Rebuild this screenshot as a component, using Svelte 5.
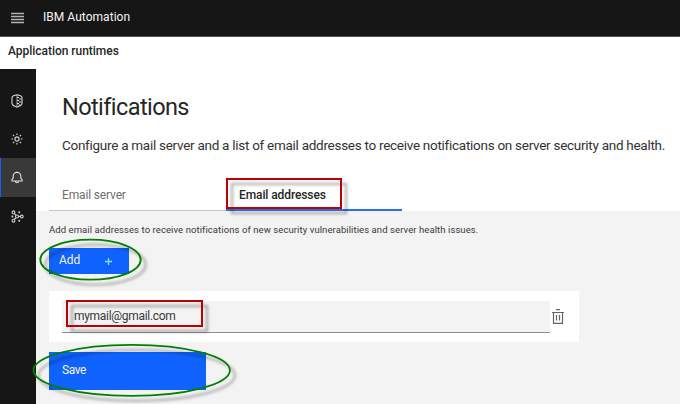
<script>
  const description = 'Configure a mail server and a list of email addresses to receive notifications on server security and health.';
  const hint = 'Add email addresses to receive notifications of new security vulnerabilities and server health issues.';
</script>

<div class="app">
  <header class="topbar">
    <svg class="menu" width="14" height="12" viewBox="0 0 14 12"><path d="M0 1.500h13M0 4.500h13M0 7.500h13M0 10.500h13" stroke="#b4b4b4" stroke-width="1.400" /></svg>
    <span class="brand">IBM Automation</span>
  </header>
  <div class="subbar"><span class="runtimes">Application runtimes</span></div>
  <div class="body">
    <nav>
      <div class="nav-item">
        <svg width="12" height="14" viewBox="0 0 12 14" fill="none" stroke="#d8d8d8"><path d="M6 .8 9.500 1.700 11 3.200v6.600L9.500 11.500 6 13.200 2.500 11.500 1 9.800V3.200L2.500 1.700z" stroke-width="1.100" /><path d="M6 1v12" stroke-width=".7" /><path d="M6 3.500h2M8 5h2.500M6 6.500h2M8 8h2.500M6 9.500h2M7.500 11h2" stroke-width="1" /></svg>
      </div>
      <div class="nav-item">
        <svg width="12" height="12" viewBox="0 0 12 12" fill="none" stroke="#cfcfcf" stroke-width="1.200"><circle cx="6" cy="6" r="2.100" /><path d="M6 .4v1.700M6 9.900v1.700M.4 6h1.700M9.900 6h1.700M2 2l1.200 1.200M8.800 8.800 10 10M10 2 8.800 3.200M3.200 8.800 2 10" /></svg>
      </div>
      <div class="nav-item active">
        <svg width="12" height="13" viewBox="0 0 12 13" fill="none" stroke="#e0e0e0" stroke-width="1.100"><path d="M6 .4v1.200M.9 10V8.700L2.200 7V5.200a3.800 3.800 0 0 1 7.600 0V7l1.300 1.700V10zM4.400 10.200a1.600 1.600 0 0 0 3.200 0" /></svg>
      </div>
      <div class="nav-item">
        <svg width="13" height="13" viewBox="0 0 13 13" fill="none" stroke="#cfcfcf" stroke-width="1.100"><circle cx="2.500" cy="2.300" r="1.400" /><circle cx="2.500" cy="10.700" r="1.400" /><circle cx="6" cy="6.500" r="1.500" /><circle cx="10.800" cy="6.500" r="1.400" /><path d="M3.300 3.500 5 5.300M3.300 9.500 5 7.700M7.500 6.500h1.900" /><g fill="#cfcfcf" stroke="none"><circle cx="1.400" cy="6.500" r="1" /><circle cx="8.200" cy="2.300" r="1" /><circle cx="8.200" cy="10.700" r="1" /></g></svg>
      </div>
    </nav>
    <main>
      <section class="intro">
        <h1>Notifications</h1>
        <p class="description">{description}</p>
        <div class="tabs">
          <div class="tab server"><span>Email server</span></div>
          <div class="tab selected"><span>Email addresses</span></div>
        </div>
      </section>
      <section class="panel">
        <p class="hint">{hint}</p>
        <button class="add"><span>Add</span><svg width="7" height="7" viewBox="0 0 7 7"><path d="M3.500 0v7M0 3.500h7" stroke="#8ed8ff" stroke-width="1.300" /></svg></button>
        <div class="card">
          <div class="field"><span>mymail@gmail.com</span></div>
          <svg class="trash" width="12" height="15" viewBox="0 0 12 15" fill="none" stroke="#666"><path d="M4 .7h4M0 3.500h12M1.500 3.500v10.800h9V3.500M4.500 6v5.500M7.500 6v5.500" stroke-width="1.200" /></svg>
        </div>
        <button class="save"><span>Save</span></button>
      </section>
    </main>
  </div>
  <svg class="marks" width="680" height="404" viewBox="0 0 680 404" fill="none">
    <defs>
      <filter id="shade" filterUnits="userSpaceOnUse" x="0" y="150" width="400" height="254" color-interpolation-filters="sRGB"><feDropShadow dx="5" dy="5" stdDeviation="1.600" flood-color="#000" flood-opacity=".35" /></filter>
    </defs>
    <g filter="url(#shade)" stroke-width="2">
      <rect x="227" y="179" width="114" height="29" stroke="#c00000" />
      <rect x="67" y="301" width="135" height="25" stroke="#c00000" />
      <ellipse cx="90.500" cy="259.700" rx="50.200" ry="20" stroke="#007f00" stroke-width="1.800" />
      <ellipse cx="131.700" cy="370.300" rx="98.200" ry="25.500" stroke="#007f00" stroke-width="1.800" />
    </g>
  </svg>
</div>

<style>
  :global(body) { margin: 0; overflow: hidden; }
  .app { position: relative; width: 680px; height: 404px; overflow: hidden; background: #fff; color: #262626; font-family: Roboto, "Noto Sans", sans-serif; display: flex; flex-direction: column; }
  .app * { box-sizing: border-box; }
  span { white-space: nowrap; }
  .topbar { height: 37px; flex: none; display: flex; align-items: center; background: #161616; border-bottom: 1px solid #555; padding-left: 11px; }
  .menu { flex: none; margin-top: -1px; }
  .brand { color: #f4f4f4; font-size: 12px; line-height: 16px; margin: -3px 0 0 18px; letter-spacing: .04px; }
  .subbar { height: 32px; flex: none; padding: 6px 8px; font-size: 12px; line-height: 16px; font-weight: 500; }
  .runtimes { letter-spacing: -.03px; }
  .body { display: flex; flex: 1; }
  nav { width: 36px; flex: none; padding-top: 13px; background: #161616; }
  .nav-item { height: 38px; display: flex; align-items: center; justify-content: center; padding-right: 2px; }
  .nav-item.active { background: #393939; border-left: 1px solid #0f62fe; height: 39px; padding-right: 3px; }
  main { flex: 1; display: flex; flex-direction: column; min-width: 0; }
  .intro { height: 142px; flex: none; }
  h1 { margin: 22px 0 0 26px; font-size: 23.500px; line-height: 32px; font-weight: 400; height: 32px; width: max-content; letter-spacing: -.580px; }
  .description { margin: 12px 0 0 26px; font-size: 13.500px; line-height: 20px; white-space: nowrap; width: max-content; letter-spacing: -.276px; color: #333; }
  .tabs { display: flex; margin: 24px 0 0 13px; height: 32px; }
  .tab { width: 177px; border-bottom: 1px solid #c6c6c6; padding: 7px 0 0 13px; font-size: 12px; line-height: 18px; color: #6f6f6f; letter-spacing: -.150px; }
  .tab.selected { width: 176px; border-bottom: 2px solid #2a6ff0; color: #262626; font-weight: 500; letter-spacing: -.100px; }
  .panel { flex: 1; background: #f3f3f3; padding: 12px 0 0 13px; }
  .hint { margin: 0; font-size: 9.500px; line-height: 14px; width: max-content; white-space: nowrap; color: #393939; letter-spacing: .080px; }
  button { display: flex; align-items: center; border: 0; padding: 0; margin: 0; background: #0f62fe; color: #f4f4f4; font: 400 12px/18px Roboto, sans-serif; }
  .add { width: 80px; height: 26px; margin-top: 11px; padding: 0 17px 2px 10px; justify-content: space-between; }
  .add svg { margin-top: 3px; }
  .card { display: flex; width: 530px; height: 51px; margin-top: 17px; padding: 10px 0 9px 13px; background: #fff; }
  .field { width: 488px; height: 32px; background: #f3f3f3; border-bottom: 1px solid #8d8d8d; padding: 6px 0 0 12px; font-size: 12px; line-height: 18px; color: #393939; letter-spacing: -.300px; }
  .trash { margin: 8px 0 0 2px; }
  .save { width: 157px; height: 38px; margin-top: 10px; padding: 0 0 2px 13px; letter-spacing: -.400px; }
  .marks { position: absolute; inset: 0; pointer-events: none; }
</style>
